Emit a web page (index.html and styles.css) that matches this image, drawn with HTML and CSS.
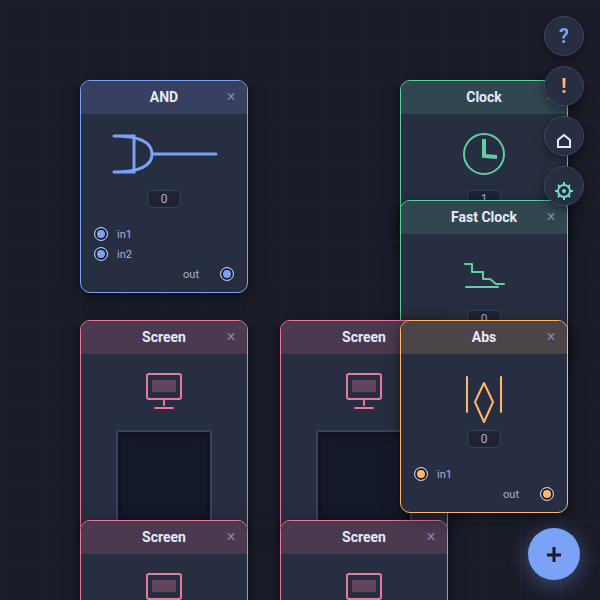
FILE: index.html
```html
<!DOCTYPE html>
<html lang="en">
<head>
    <meta charset="UTF-8">
    <meta name="viewport" content="width=device-width, initial-scale=1.0">
    <title>Logic Canvas</title>
    <link rel="stylesheet" href="styles.css">
</head>
<body>
    <!-- shared icon for all screen nodes -->
    <svg class="defs" aria-hidden="true">
        <symbol id="icon-screen" viewBox="0 0 120 60">
            <rect x="43" y="10" width="34" height="25" rx="2" />
            <rect x="48" y="16" width="24" height="12" fill="currentColor" stroke="none" opacity="0.3" />
            <path d="M60 35V41M51 44H69" />
        </symbol>
    </svg>

    <main class="canvas">
        <section class="node logic" style="left: 80px; top: 80px">
            <header class="node-header">
                <h2>AND</h2>
                <button class="close" aria-label="Remove AND">×</button>
            </header>
            <svg class="icon gate" viewBox="0 0 120 60">
                <path d="M10 12H30V48H10M10 12C36 12 48 18 48 30C48 42 36 48 10 48M48 30H112" />
            </svg>
            <output class="value">0</output>
            <ul class="ports">
                <li><span class="port"></span>in1</li>
                <li><span class="port"></span>in2</li>
                <li class="out">out<span class="port"></span></li>
            </ul>
        </section>

        <section class="node input" style="left: 400px; top: 80px">
            <header class="node-header">
                <h2>Clock</h2>
                <button class="close" aria-label="Remove Clock">×</button>
            </header>
            <svg class="icon" viewBox="0 0 120 60">
                <circle cx="60" cy="30" r="20" />
                <path class="hands" d="M60 15V32L73 33" />
            </svg>
            <output class="value">1</output>
            <ul class="ports">
                <li class="out">out<span class="port"></span></li>
            </ul>
        </section>

        <section class="node input" style="left: 400px; top: 200px">
            <header class="node-header">
                <h2>Fast Clock</h2>
                <button class="close" aria-label="Remove Fast Clock">×</button>
            </header>
            <svg class="icon" viewBox="0 0 120 60">
                <path d="M41 20H48V28H59V35H66L72 40H80M42 43H74" />
            </svg>
            <output class="value">0</output>
            <ul class="ports">
                <li class="out">out<span class="port"></span></li>
            </ul>
        </section>

        <section class="node display" style="left: 80px; top: 320px">
            <header class="node-header">
                <h2>Screen</h2>
                <button class="close" aria-label="Remove Screen">×</button>
            </header>
            <svg class="icon"><use href="#icon-screen" /></svg>
            <div class="pixels"></div>
        </section>

        <section class="node display" style="left: 280px; top: 320px">
            <header class="node-header">
                <h2>Screen</h2>
                <button class="close" aria-label="Remove Screen">×</button>
            </header>
            <svg class="icon"><use href="#icon-screen" /></svg>
            <div class="pixels"></div>
        </section>

        <section class="node display" style="left: 80px; top: 520px">
            <header class="node-header">
                <h2>Screen</h2>
                <button class="close" aria-label="Remove Screen">×</button>
            </header>
            <svg class="icon"><use href="#icon-screen" /></svg>
            <div class="pixels"></div>
        </section>

        <section class="node display" style="left: 280px; top: 520px">
            <header class="node-header">
                <h2>Screen</h2>
                <button class="close" aria-label="Remove Screen">×</button>
            </header>
            <svg class="icon"><use href="#icon-screen" /></svg>
            <div class="pixels"></div>
        </section>

        <section class="node math" style="left: 400px; top: 320px">
            <header class="node-header">
                <h2>Abs</h2>
                <button class="close" aria-label="Remove Abs">×</button>
            </header>
            <svg class="icon" viewBox="0 0 120 60">
                <path d="M43 13V48M77 13V48M60 19L69 38L60 58L51 38Z" />
            </svg>
            <output class="value">0</output>
            <ul class="ports">
                <li><span class="port"></span>in1</li>
                <li class="out">out<span class="port"></span></li>
            </ul>
        </section>
    </main>

    <nav class="toolbar">
        <button class="tool help">?</button>
        <button class="tool alert">!</button>
        <button class="tool home" aria-label="Home">
            <svg viewBox="0 0 20 20"><path d="M4 16V9L10 4L16 9V16Z" /></svg>
        </button>
        <button class="tool settings" aria-label="Settings">
            <svg viewBox="0 0 20 20">
                <circle cx="10" cy="10" r="6" />
                <circle cx="10" cy="10" r="2" fill="currentColor" stroke="none" />
                <path d="M10 4V1M10 16V19M4 10H1M16 10H19M6 6L4 4M14 6L16 4M6 14L4 16M14 14L16 16" />
            </svg>
        </button>
    </nav>

    <button class="add" aria-label="Add node">
        <svg viewBox="0 0 20 20"><path d="M10 3V18M3 11H17" /></svg>
    </button>
</body>
</html>
```
FILE: styles.css
```css
* {
    box-sizing: border-box;
}
body {
    margin: 0;
    height: 100vh;
    overflow: hidden;
    background: #1a1c28;
    color: #a9b1d6;
    font-family: Roboto, sans-serif;
    font-size: 12px;
}
button {
    padding: 0;
    border: none;
    font-family: inherit;
    cursor: pointer;
}
svg {
    fill: none;
    stroke: currentColor;
    stroke-width: 2;
}
.defs {
    position: absolute;
    width: 0;
    height: 0;
}

/* canvas */
.canvas {
    position: relative;
    height: 100%;
    overflow: hidden;
    background-image:
        linear-gradient(rgba(59, 66, 97, 0.15) 1px, transparent 1px),
        linear-gradient(90deg, rgba(59, 66, 97, 0.15) 1px, transparent 1px);
    background-size: 40px 40px;
}

/* nodes */
.node {
    position: absolute;
    display: flex;
    flex-direction: column;
    align-items: center;
    width: 168px;
    padding-bottom: 8px;
    background: #282e41;
    border: 1px solid var(--accent);
    border-radius: 10px;
    box-shadow: 0 4px 16px rgba(0, 0, 0, 0.5);
    overflow: hidden;
}
.logic {
    --accent: #7aa2f7;
    --header: #37405f;
}
.input {
    --accent: #60d0a4;
    --header: #31474f;
}
.display {
    --accent: #e8799c;
    --header: #4b3a4f;
}
.math {
    --accent: #ffb86c;
    --header: #4b4548;
}
.node-header {
    position: relative;
    width: 100%;
    height: 33px;
    background: var(--header);
    border-bottom: 1px solid #3b4261;
}
.node-header h2 {
    margin: 0;
    color: #e6eaff;
    font-size: 14px;
    font-weight: 700;
    line-height: 32px;
    text-align: center;
}
.close {
    position: absolute;
    top: 8px;
    right: 8px;
    width: 16px;
    height: 16px;
    background: none;
    color: #7e86a8;
    font-size: 16px;
    line-height: 16px;
}
.icon {
    width: 120px;
    height: 60px;
    margin-top: 10px;
    color: var(--accent);
    stroke-linecap: round;
    stroke-linejoin: round;
}
.gate {
    stroke-width: 3;
    stroke-linejoin: miter;
}
.hands {
    stroke-width: 4;
    stroke-linejoin: miter;
    stroke-linecap: butt;
}
.value {
    width: 34px;
    margin-top: 6px;
    background: #1f2335;
    border: 1px solid #3b4261;
    border-radius: 6px;
    line-height: 16px;
    text-align: center;
}
.pixels {
    width: 96px;
    height: 96px;
    margin-top: 6px;
    background: #14192a;
    border: 2px solid #3b4261;
    border-radius: 4px;
    box-shadow: inset 0 0 10px rgba(0, 0, 0, 0.5);
}

/* ports */
.ports {
    width: 100%;
    margin: 16px 0 0;
    padding: 0 13px;
    list-style: none;
    font-size: 11px;
}
.ports li {
    display: flex;
    align-items: center;
    gap: 9px;
    height: 20px;
}
.ports .out {
    justify-content: flex-end;
    gap: 21px;
}
.port {
    width: 14px;
    height: 14px;
    background: var(--accent);
    border: 1px solid #c0caf5;
    border-radius: 50%;
    box-shadow: inset 0 0 0 2px #1a1b26;
}

/* floating buttons */
.toolbar {
    position: fixed;
    top: 16px;
    right: 16px;
    display: flex;
    flex-direction: column;
    gap: 10px;
}
.tool {
    display: flex;
    align-items: center;
    justify-content: center;
    width: 40px;
    height: 40px;
    background: #282e41;
    border: 1px solid #3b4261;
    border-radius: 50%;
    box-shadow: 0 4px 12px rgba(0, 0, 0, 0.4);
    font-size: 20px;
    font-weight: 700;
}
.tool svg {
    width: 20px;
    height: 20px;
    margin-top: 10px;
}
.help {
    color: #7aa2f7;
}
.alert {
    color: #ffb86c;
}
.home {
    color: #e6eaff;
}
.settings {
    color: #73daca;
}
.add {
    position: fixed;
    right: 20px;
    bottom: 20px;
    display: flex;
    align-items: center;
    justify-content: center;
    width: 52px;
    height: 52px;
    background: #7aa2f7;
    border-radius: 50%;
    box-shadow: 0 4px 20px rgba(122, 162, 247, 0.4);
    color: #1a1b26;
}
.add svg {
    width: 20px;
    height: 20px;
    stroke-width: 3;
}
```
